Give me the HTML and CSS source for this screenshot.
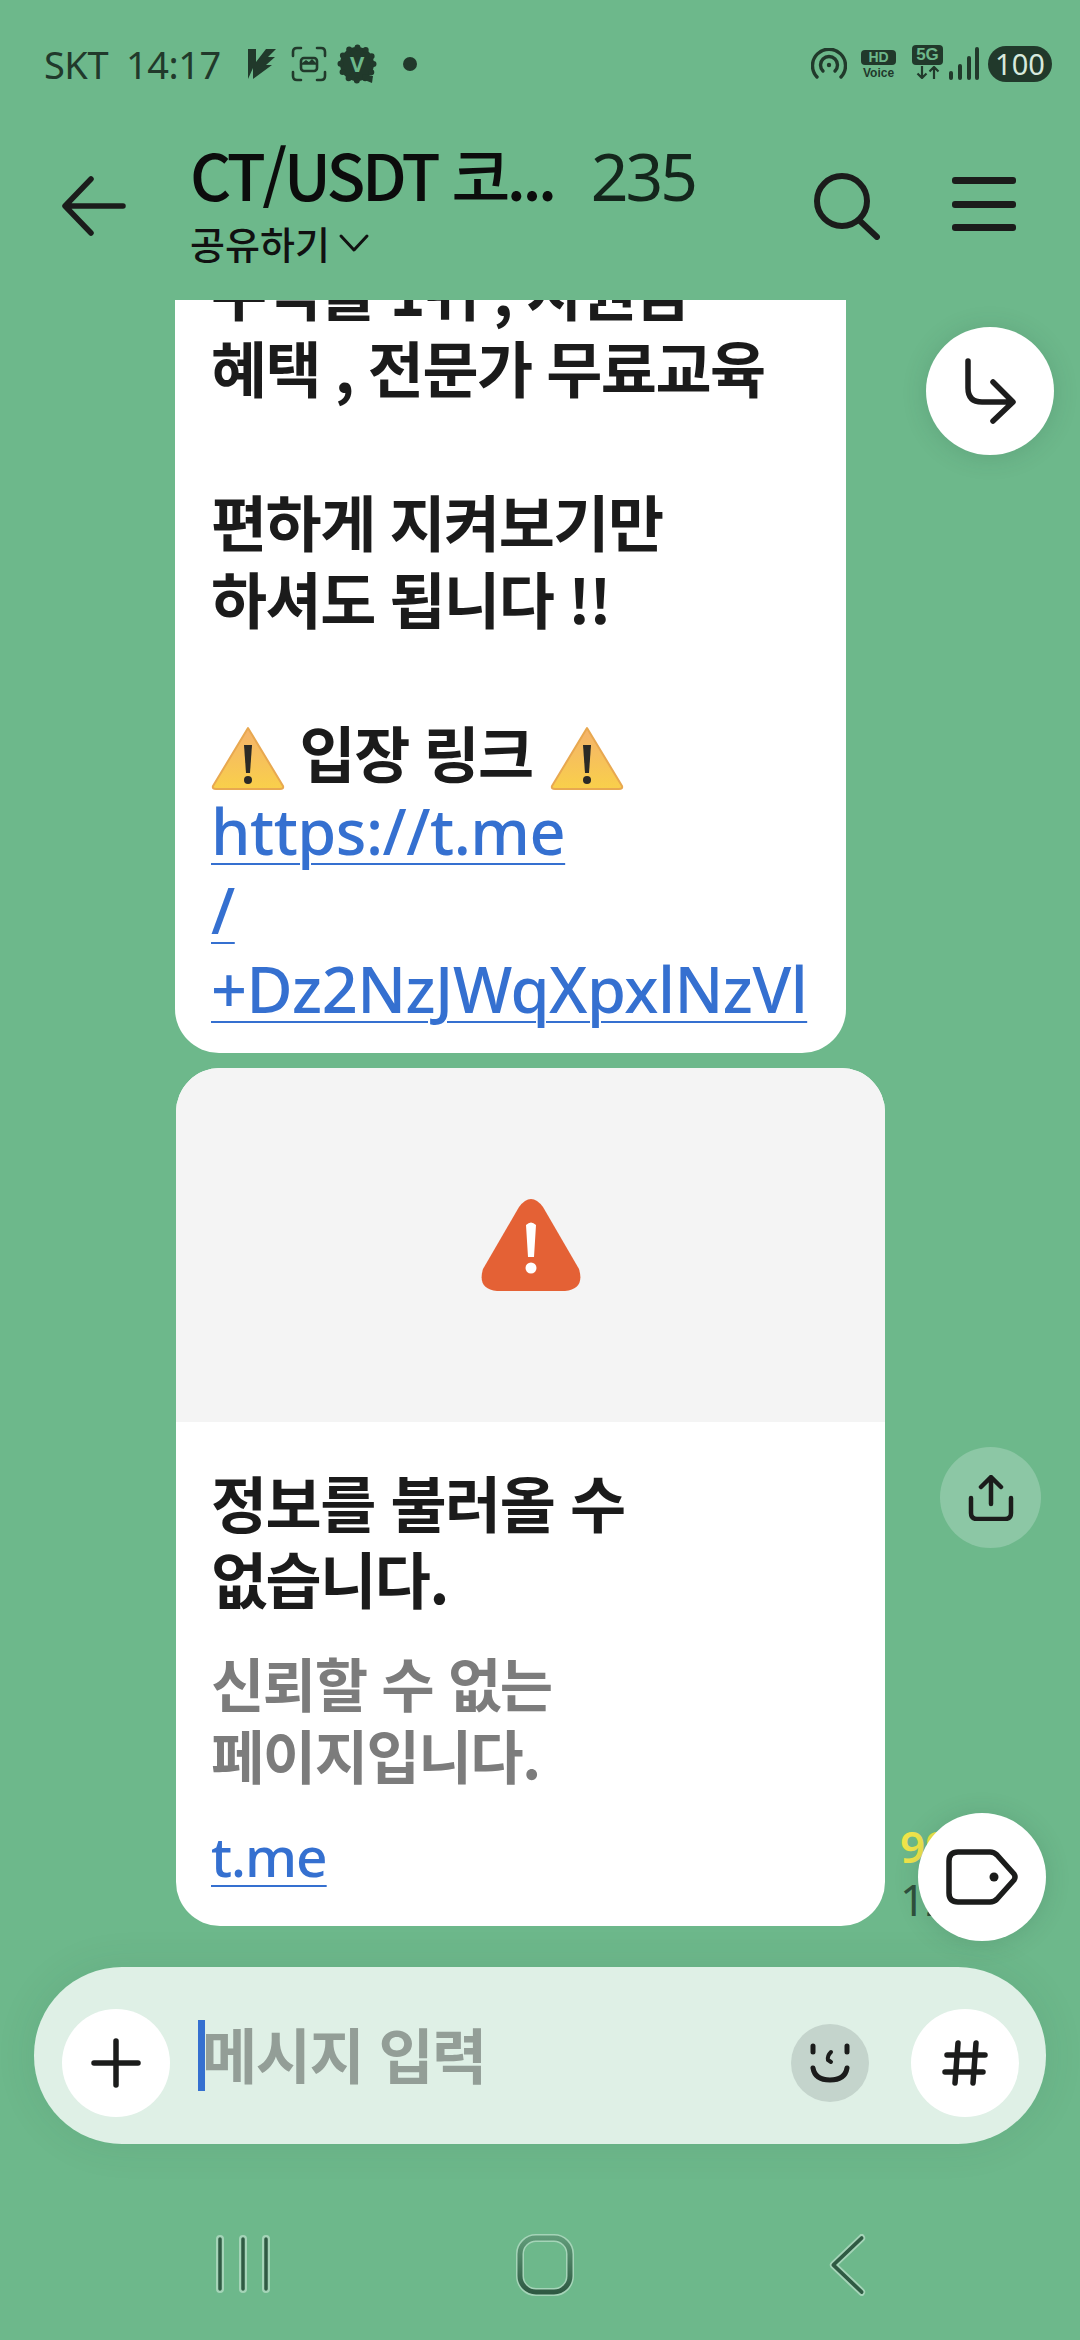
FILE: index.html
```html
<!DOCTYPE html>
<html lang="ko">
<head>
  <meta charset="UTF-8">
  <title>CT/USDT</title>
  <link rel="stylesheet" href="styles.css">
</head>
<body>
<div class="phone">

  <div class="status-bar">
    <div class="status-left">
      <span class="carrier">SKT</span>
      <span class="clock">14:17</span>
      <svg class="st-icon bolt" width="30" height="32" viewBox="0 0 30 32"><path d="M1 1h8v13L19 1h10l-8 8h7l-9 8h6L6 31v-11L1 31z" fill="#21392b"/></svg>
      <svg class="st-icon" width="36" height="36" viewBox="0 0 36 36" fill="none" stroke="#21392b" stroke-width="2.600" stroke-linecap="round"><path d="M2 10V6q0-4 4-4h4M26 2h4q4 0 4 4v4M34 26v4q0 4-4 4h-4M10 34H6q-4 0-4-4v-4"/><rect x="10" y="12" width="16" height="13" rx="3"/><path d="M11 18l4-3 3 2 3-3 4 4z" fill="#21392b" stroke-width="1.500"/></svg>
      <svg class="st-icon" width="40" height="40" viewBox="0 0 40 40"><circle cx="20" cy="20" r="17" fill="#21392b"/><circle cx="20" cy="20" r="16.500" fill="none" stroke="#21392b" stroke-width="6" stroke-linecap="round" stroke-dasharray="0 8.640"/><path d="M26 30l10 2-1 7-10-4z" fill="#21392b"/><text x="20" y="28" class="badge-v">V</text></svg>
      <span class="st-dot"></span>
    </div>
    <div class="status-right">
      <svg class="wifi" width="36" height="32" viewBox="0 0 36 32" fill="none" stroke="#21392b" stroke-width="3.400" stroke-linecap="round"><path d="M6 29A16.500 16.500 0 1 1 30 29"/><path d="M12 23a8.500 8.500 0 1 1 12 0"/><circle cx="18" cy="17" r="2.200" fill="#21392b" stroke="none"/></svg>
      <div class="hd">
        <span class="hd-box">HD</span>
        <span class="hd-voice">Voice</span>
      </div>
      <div class="net">
        <span class="net-box">5G</span>
        <svg width="24" height="13" viewBox="0 0 24 13" fill="none" stroke="#21392b" stroke-width="2.200"><path d="M6 0v12M1.500 7.500L6 12l4.500-4.500M18 13V1M13.500 5.500L18 1l4.500 4.500"/></svg>
      </div>
      <svg class="signal" width="30" height="34" viewBox="0 0 30 34"><rect x="0" y="24" width="4" height="9" rx="2" fill="#21392b"/><rect x="9" y="17" width="4" height="16" rx="2" fill="#21392b"/><rect x="18" y="9" width="4" height="24" rx="2" fill="#21392b"/><rect x="26" y="0" width="4" height="33" rx="2" fill="#21392b"/></svg>
      <span class="battery">100</span>
    </div>
  </div>

  <header class="app-bar">
    <button class="icon-btn back">
      <svg width="64" height="64" viewBox="0 0 64 64" fill="none" stroke="#1b1c1b" stroke-width="5.500" stroke-linecap="round" stroke-linejoin="round"><path d="M5 32h56M29 5L3 32l26 27"/></svg>
    </button>
    <div class="title-box">
      <div class="title-line">
        <span class="title">CT/USDT 코...</span>
        <span class="count">235</span>
      </div>
      <div class="share">공유하기
        <svg width="32" height="20" viewBox="0 0 32 20" fill="none" stroke="#111" stroke-width="3" stroke-linecap="round" stroke-linejoin="round"><path d="M3 3l13 14L29 3"/></svg>
      </div>
    </div>
    <button class="icon-btn search">
      <svg width="66" height="68" viewBox="0 0 66 68" fill="none" stroke="#1b1c1b" stroke-width="6" stroke-linecap="round"><circle cx="28" cy="29" r="25"/><path d="M46 49l17 16"/></svg>
    </button>
    <button class="icon-btn menu">
      <span></span><span></span><span></span>
    </button>
  </header>

  <main class="chat">
    <div class="bubble first">
      <div class="clip-text">
        <p>수익률 1위 , 지원금<br>혜택 , 전문가 무료교육</p>
        <p>편하게 지켜보기만<br>하셔도 됩니다 !!</p>
        <p>
          <svg class="warn" width="74" height="64" viewBox="0 0 74 64"><defs><linearGradient id="wg" x1="0" y1="0" x2="0" y2="1"><stop offset="0" stop-color="#f4b26c"/><stop offset="1" stop-color="#f9d04a"/></linearGradient></defs><path d="M37 2L72 60q1 3-3 3H5q-4 0-3-3z" fill="url(#wg)" stroke="#e8a850" stroke-width="2" stroke-linejoin="round"/><path d="M33 19h8l-2 28h-4z" fill="#2b2a26"/><circle cx="37" cy="54" r="4" fill="#2b2a26"/></svg>
          <span class="link-title">입장 링크</span>
          <svg class="warn" width="74" height="64" viewBox="0 0 74 64"><path d="M37 2L72 60q1 3-3 3H5q-4 0-3-3z" fill="url(#wg)" stroke="#e8a850" stroke-width="2" stroke-linejoin="round"/><path d="M33 19h8l-2 28h-4z" fill="#2b2a26"/><circle cx="37" cy="54" r="4" fill="#2b2a26"/></svg>
          <br><a class="link">https://t.me</a><br><a class="link">/</a><br><a class="link">+Dz2NzJWqXpxlNzVl</a>
        </p>
      </div>
    </div>

    <div class="preview">
      <div class="preview-top">
        <svg width="102" height="92" viewBox="0 0 102 92"><path d="M39 8q12-16 24 0l36 62q6 20-14 22H17Q-3 90 3 70z" fill="#e46135"/><path d="M46 26q5-5 10 0l-2 32h-6z" fill="#fff"/><circle cx="51" cy="69" r="5.500" fill="#fff"/></svg>
      </div>
      <div class="preview-body">
        <h4>정보를 불러올 수<br>없습니다.</h4>
        <p class="preview-desc">신뢰할 수 없는<br>페이지입니다.</p>
        <a class="link preview-link">t.me</a>
      </div>
    </div>

    <button class="fab jump">
      <svg width="52" height="66" viewBox="0 0 52 66" fill="none" stroke="#1d1d1d" stroke-width="5.500" stroke-linecap="round" stroke-linejoin="round"><path d="M4 3v27q0 14 14 14h30M29 24l20 20-20 19"/></svg>
    </button>
    <button class="fab share-btn">
      <svg width="46" height="46" viewBox="0 0 46 46" fill="none" stroke="#1b1c1b" stroke-width="4.500" stroke-linecap="round" stroke-linejoin="round"><path d="M23 29V3M13 12l10-10 10 10M3 23v15q0 6 6 6h28q6 0 6-6V23"/></svg>
    </button>
    <div class="msg-meta">
      <span class="unread">99</span>
      <span class="msg-time">12:00</span>
    </div>
    <button class="fab tag">
      <svg width="72" height="56" viewBox="0 0 72 56" fill="none" stroke="#1b1c1b" stroke-width="5.500" stroke-linejoin="round"><path d="M12 3h32q4 0 7 3l17 19q2 3 0 6L51 50q-3 3-7 3H12q-9 0-9-9V12q0-9 9-9z"/><circle cx="48" cy="28" r="4.500" fill="#1b1c1b" stroke="none"/></svg>
    </button>
  </main>

  <div class="composer">
    <div class="round-btn">
      <svg width="50" height="50" viewBox="0 0 50 50" stroke="#1b1c1b" stroke-width="5.500" stroke-linecap="round"><path d="M25 3v44M3 25h44"/></svg>
    </div>
    <div class="input">
      <span class="caret"></span>
      <span class="placeholder">메시지 입력</span>
    </div>
    <div class="emoji-btn">
      <svg width="40" height="40" viewBox="0 0 40 40" fill="none" stroke="#1b1c1b" stroke-width="5" stroke-linecap="round"><path d="M3 3v6M37 3v6M3 25q2 12 17 12t17-12"/><path d="M21 9q-4 4-3 8l3 2" stroke-width="4"/></svg>
    </div>
    <div class="round-btn hash">
      <svg width="46" height="46" viewBox="0 0 46 46" stroke="#1b1c1b" stroke-width="5.500" stroke-linecap="round"><path d="M16 3l-3 40M34 3l-3 40M5 15h38M3 32h38"/></svg>
    </div>
  </div>

  <nav class="nav-bar">
    <svg width="56" height="60" viewBox="0 0 56 60" fill="none" stroke-linecap="round"><g stroke="#a5d4b8" stroke-width="8"><path d="M5 5v50M28 5v50M51 5v50"/></g><g stroke="#2f5a43" stroke-width="3.500"><path d="M5 5v50M28 5v50M51 5v50"/></g></svg>
    <svg class="home" width="58" height="62" viewBox="0 0 58 62" fill="none"><defs><linearGradient id="hm" x1="0" y1="0" x2="0" y2="1"><stop offset="0" stop-color="#5f9a78"/><stop offset="1" stop-color="#2f5a43"/></linearGradient></defs><rect x="4" y="4" width="50" height="54" rx="16" stroke="#a5d4b8" stroke-width="8"/><rect x="4" y="4" width="50" height="54" rx="16" stroke="url(#hm)" stroke-width="5"/></svg>
    <svg width="44" height="62" viewBox="0 0 44 62" fill="none" stroke-linecap="round" stroke-linejoin="round"><path d="M38 4L5 31l33 27" transform="matrix(.86 0 0 1 5 0)" stroke="#a5d4b8" stroke-width="8"/><path d="M38 4L5 31l33 27" transform="matrix(.86 0 0 1 5 0)" stroke="#2f5a43" stroke-width="4"/></svg>
  </nav>

</div>
</body>
</html>
```

FILE: styles.css
```css
* {
  box-sizing: border-box;
}
body {
  margin: 0;
  font-family: "Noto Sans CJK KR", "Noto Sans", sans-serif;
  background-color: #6db88b;
}
p, h4 {
  margin: 0;
}
button {
  border: none;
  padding: 0;
  background: none;
}
.phone {
  width: 1080px;
  height: 2340px;
  display: flex;
  flex-direction: column;
  overflow: hidden;
  background-color: #6db88b;
}

/* status bar */
.status-bar {
  height: 130px;
  flex: none;
  padding: 44px 28px 0 44px;
  display: flex;
  justify-content: space-between;
  align-items: flex-start;
  color: #21392b;
}
.status-left {
  display: flex;
  align-items: center;
  height: 40px;
  font-family: "Noto Sans", sans-serif;
  font-size: 38px;
  letter-spacing: -0.5px;
}
.carrier {
  margin-right: 18px;
}
.st-icon {
  margin-left: 10px;
  flex: none;
}
.clock {
  margin-right: 16px;
}
.bolt {
  margin-right: 4px;
}
.badge-v {
  font-family: "Noto Sans", sans-serif;
  font-size: 22px;
  font-weight: 700;
  fill: #6db88b;
  text-anchor: middle;
}
.st-dot {
  width: 14px;
  height: 14px;
  border-radius: 50%;
  background-color: #21392b;
  margin-left: 26px;
}
.status-right {
  display: flex;
  align-items: center;
  height: 40px;
}
.wifi {
  margin-right: 14px;
}
.hd {
  display: flex;
  flex-direction: column;
  align-items: center;
  font-family: "Liberation Sans", sans-serif;
  font-weight: 700;
  line-height: 1;
  margin-right: 16px;
}
.hd-box {
  width: 35px;
  height: 15px;
  border-radius: 4px;
  background-color: #21392b;
  color: #6db88b;
  font-size: 14px;
  text-align: center;
  line-height: 15px;
}
.hd-voice {
  font-size: 12px;
  margin-top: 2px;
}
.net {
  display: flex;
  flex-direction: column;
  align-items: center;
  gap: 1px;
  margin-top: -4px;
  margin-right: 6px;
}
.net-box {
  width: 31px;
  height: 20px;
  border-radius: 4px;
  background-color: #21392b;
  color: #6db88b;
  font-family: "Liberation Sans", sans-serif;
  font-weight: 700;
  font-size: 17px;
  line-height: 20px;
  text-align: center;
}
.signal {
  margin-right: 9px;
}
.battery {
  width: 64px;
  height: 36px;
  border-radius: 18px;
  background-color: #21392b;
  color: #d7e9dd;
  font-family: "Noto Sans", sans-serif;
  font-size: 29px;
  line-height: 36px;
  text-align: center;
}

/* app bar */
.app-bar {
  height: 170px;
  flex: none;
  display: flex;
  align-items: flex-start;
}
.icon-btn {
  display: block;
  flex: none;
}
.back {
  margin: 44px 0 0 62px;
}
.title-box {
  margin-left: 64px;
  width: 600px;
  flex: none;
}
.title-line {
  display: flex;
  align-items: baseline;
  height: 87px;
  line-height: 87px;
}
.title {
  font-size: 64px;
  font-weight: 500;
  color: #0c0c0c;
  letter-spacing: -3.500px;
}
.count {
  font-family: "Noto Sans", sans-serif;
  font-size: 66px;
  color: #14261c;
  margin-left: 37px;
  letter-spacing: -3px;
}
.share {
  font-size: 38px;
  font-weight: 500;
  color: #111;
  line-height: 44px;
  margin-top: 4px;
  display: flex;
  align-items: center;
  gap: 8px;
}
.search {
  margin: 42px 0 0 24px;
}
.menu {
  margin: 47px 0 0 72px;
  width: 64px;
  height: 54px;
  display: flex;
  flex-direction: column;
  justify-content: space-between;
}
.menu span {
  display: block;
  height: 7px;
  border-radius: 3px;
  background-color: #1b1c1b;
}

/* chat */
.chat {
  height: 1667px;
  flex: none;
  position: relative;
  overflow: hidden;
}
.bubble {
  width: 671px;
  height: 753px;
  margin-left: 175px;
  background-color: #fff;
  border-radius: 0 0 44px 44px;
  overflow: hidden;
  padding: 0 36px;
}
.clip-text {
  font-size: 61px;
  font-weight: 700;
  line-height: 77px;
  color: #1b1b1b;
  letter-spacing: -1.500px;
  word-spacing: -1px;
  margin-top: -49px;
  white-space: nowrap;
}
.clip-text p {
  margin-bottom: 77px;
}
.warn {
  vertical-align: -2px;
  margin: -10px 0;
}
.link-title {
  margin-right: 3px;
}
.link {
  color: #3570d0;
  font-family: "Noto Sans", sans-serif;
  font-weight: 500;
  font-size: 63px;
  letter-spacing: -0.500px;
  text-decoration: underline;
  text-decoration-thickness: 2px;
  text-underline-offset: 8px;
}
.preview {
  width: 709px;
  height: 858px;
  margin: 15px 0 0 176px;
  border-radius: 44px;
  overflow: hidden;
  background-color: #fff;
}
.preview-top {
  height: 354px;
  background-color: #f4f4f4;
  display: flex;
  align-items: center;
  justify-content: center;
}
.preview-body {
  padding: 42px 35px 0;
}
.preview-body h4 {
  font-size: 61px;
  font-weight: 700;
  line-height: 76px;
  letter-spacing: -1.500px;
  color: #1b1b1b;
}
.preview-desc {
  margin-top: 30px;
  font-size: 58px;
  font-weight: 700;
  line-height: 72px;
  letter-spacing: -1.500px;
  color: #7c7c7c;
}
.preview-link {
  display: inline-block;
  margin-top: 30px;
  font-size: 55px;
  letter-spacing: -1px;
  line-height: 72px;
}
.fab {
  position: absolute;
  border-radius: 50%;
  display: flex;
  align-items: center;
  justify-content: center;
  background-color: #fff;
  box-shadow: 0 2px 24px rgba(40, 80, 60, 0.18);
}
.jump {
  left: 926px;
  top: 27px;
  width: 128px;
  height: 128px;
}
.share-btn {
  left: 940px;
  top: 1147px;
  width: 101px;
  height: 101px;
  background-color: #8cc7a5;
  box-shadow: none;
}
.tag {
  left: 918px;
  top: 1513px;
  width: 128px;
  height: 128px;
}
.msg-meta {
  position: absolute;
  left: 900px;
  top: 1520px;
  font-family: "Noto Sans", sans-serif;
  font-size: 44px;
  line-height: 53px;
  display: flex;
  flex-direction: column;
}
.unread {
  color: #f0e44a;
  font-weight: 600;
}
.msg-time {
  color: #2f4f3c;
}

/* composer */
.composer {
  width: 1012px;
  height: 177px;
  flex: none;
  margin-left: 34px;
  background-color: #dff0e6;
  border-radius: 88px;
  display: flex;
  align-items: center;
  padding: 0 27px 0 28px;
  box-shadow: 0 0 40px rgba(40, 80, 60, 0.1);
}
.round-btn {
  width: 108px;
  height: 108px;
  flex: none;
  border-radius: 50%;
  background-color: #fff;
  display: flex;
  align-items: center;
  justify-content: center;
  margin-top: 15px;
}
.input {
  flex: 1;
  display: flex;
  align-items: center;
  padding-left: 28px;
}
.caret {
  width: 7px;
  height: 71px;
  background-color: #3570d0;
  flex: none;
}
.placeholder {
  font-size: 60px;
  font-weight: 700;
  color: #939e97;
  letter-spacing: -1.500px;
  line-height: 72px;
  margin: 0 0 6px -3px;
}
.emoji-btn {
  width: 78px;
  height: 78px;
  flex: none;
  border-radius: 50%;
  background-color: #c4d4cc;
  display: flex;
  align-items: center;
  justify-content: center;
  margin: 15px 42px 0 0;
}

/* nav bar */
.nav-bar {
  flex: 1;
  display: flex;
  align-items: flex-start;
  padding: 90px 212px 0 215px;
  justify-content: space-between;
}
.home {
  margin-left: -6px;
}
```
